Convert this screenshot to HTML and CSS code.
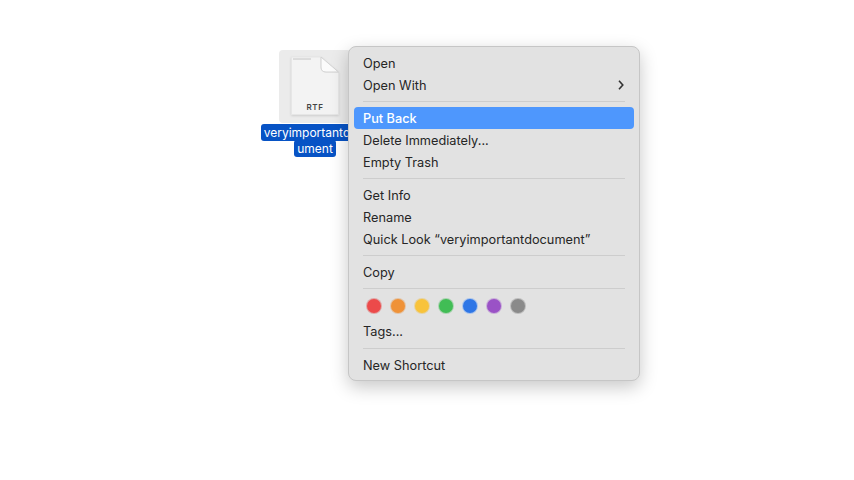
FILE: index.html
```html
<!DOCTYPE html>
<html lang="en">
<head>
<meta charset="utf-8">
<title>Trash context menu</title>
<link rel="stylesheet" href="styles.css">
</head>
<body>
<div class="desktop">
  <div class="file">
    <div class="thumb">
      <svg class="doc" width="50" height="60" viewBox="0 0 50 60">
        <path d="M1.500 1H31V11Q31 16 36 16H48.500V58.500H1.500Z" fill="#f3f3f3" stroke="#e6e6e6"/>
        <path d="M31 1L48.500 16H36Q31 16 31 11Z" fill="#fbfbfb" stroke="#d2d2d2"/>
        <path d="M3 3H21" stroke="#c4c4c4" fill="none"/>
      </svg>
      <span class="ext">RTF</span>
    </div>
    <div class="label">
      <span class="label-line first">veryimportantdoc</span>
      <span class="label-line">ument</span>
    </div>
  </div>
  <div class="menu">
    <div class="item">Open</div>
    <div class="item">Open With
      <svg class="chev" width="6" height="10" viewBox="0 0 6 10"><path d="M1 .8L4.800 5L1 9.200" fill="none" stroke="#333" stroke-width="1.600"/></svg>
    </div>
    <div class="sep"></div>
    <div class="item active">Put Back</div>
    <div class="item">Delete Immediately...</div>
    <div class="item">Empty Trash</div>
    <div class="sep"></div>
    <div class="item">Get Info</div>
    <div class="item">Rename</div>
    <div class="item">Quick Look “veryimportantdocument”</div>
    <div class="sep"></div>
    <div class="item">Copy</div>
    <div class="sep"></div>
    <div class="tags">
      <span class="dot red"></span>
      <span class="dot orange"></span>
      <span class="dot yellow"></span>
      <span class="dot green"></span>
      <span class="dot blue"></span>
      <span class="dot purple"></span>
      <span class="dot gray"></span>
    </div>
    <div class="item tags-label">Tags...</div>
    <div class="sep"></div>
    <div class="item">New Shortcut</div>
  </div>
</div>
</body>
</html>
```

FILE: styles.css
```css
* { box-sizing: border-box; }
html, body { margin: 0; height: 100%; background: #fff; overflow: hidden; }
body { font-family: Inter, "Noto Sans", sans-serif; }
.desktop { position: relative; width: 854px; height: 480px; background: #fff; }

.file { position: absolute; left: 261px; top: 50px; width: 108px; }
.thumb {
  position: relative; margin-left: 18px; width: 72px; height: 73px;
  background: #ebebeb; border-radius: 4px;
}
.doc { position: absolute; left: 11px; top: 6px; filter: drop-shadow(0 1px 1px rgba(0,0,0,.12)); }
.ext {
  position: absolute; left: 12px; top: 52px; width: 48px; text-align: center;
  font-size: 8px; font-weight: 600; letter-spacing: .6px; color: #444; line-height: 10px;
}
.label { display: flex; flex-direction: column; align-items: center; margin-top: 1px; }
.label-line {
  background: #0753c5; color: #fff; font-size: 12px; line-height: 17px;
  padding: 0 3px; border-radius: 3px; height: 17px; white-space: nowrap;
}
.label-line.first { margin-left: -2px; }
.label-line + .label-line { margin-top: -1px; }

.menu {
  position: absolute; left: 348px; top: 46px; width: 292px; height: 335px;
  padding: 5px; background: #e2e2e2;
  border: 1px solid #c6c6c6; border-radius: 8px;
  box-shadow: 0 6px 18px rgba(0,0,0,.22);
}
.item {
  display: flex; align-items: center; justify-content: space-between;
  height: 22px; padding: 0 9px;
  font-size: 12.75px; color: #262626; border-radius: 4px; white-space: nowrap;
}
.item.active { background: #4e97fd; color: #fff; font-weight: 500; }
.tags-label { margin-bottom: 1px; }
.chev { margin-right: 1px; }
.sep { height: 11px; padding: 5px 9px; }
.sep::before { content: ""; display: block; height: 1px; background: #cdcdcd; }

.tags { display: flex; gap: 10px; height: 26px; padding: 4px 0 0 13px; }
.dot { width: 14px; height: 14px; border-radius: 50%; margin-top: 1px; }
.red { background: #ec4a4a; box-shadow: 0 0 0 1px #e0a7a7; }
.orange { background: #ef9238; box-shadow: 0 0 0 1px #e3c3a5; }
.yellow { background: #f8c33b; box-shadow: 0 0 0 1px #e6d3a2; }
.green { background: #41bd55; box-shadow: 0 0 0 1px #a9d3af; }
.blue { background: #2e76e6; box-shadow: 0 0 0 1px #a8c3eb; }
.purple { background: #9a52c6; box-shadow: 0 0 0 1px #c9aed9; }
.gray { background: #8a8a8a; box-shadow: 0 0 0 1px #bcbcbc; }
```
